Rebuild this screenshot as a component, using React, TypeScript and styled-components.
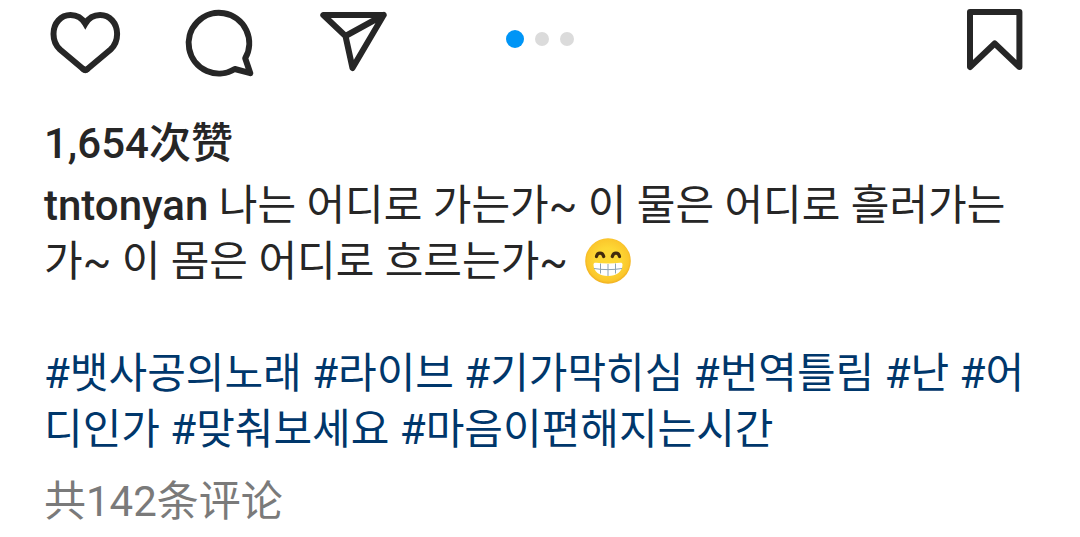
import React from "react";
import styled, { createGlobalStyle } from "styled-components";

const GlobalStyle = createGlobalStyle`
  body {
    margin: 0;
    background: #ffffff;
    color: #262626;
    font-family: Roboto, "Noto Sans CJK KR", sans-serif;
    font-size: 42px;
    line-height: 56px;
  }
`;

const Post = styled.article`
  padding-top: 6px;
`;

const Toolbar = styled.div`
  display: grid;
  grid-template-columns: 1fr auto 1fr;
  align-items: start;
  padding: 0 49px;
`;

const Actions = styled.div<{ $end?: boolean }>`
  display: flex;
  gap: 63px;
  justify-content: ${(p) => (p.$end ? "flex-end" : "flex-start")};
`;

const IconButton = styled.button`
  display: block;
  padding: 0;
  border: 0;
  background: none;
  color: inherit;
  cursor: pointer;
`;

const Glyph = styled.svg`
  display: block;
  width: 72px;
  height: 72px;
  fill: none;
  stroke: currentColor;
  stroke-width: 6;
  stroke-linejoin: round;
  stroke-linecap: round;
`;

const Dots = styled.div`
  display: flex;
  align-items: center;
  gap: 11px;
  height: 66px;
`;

const Dot = styled.span<{ $active?: boolean }>`
  width: ${(p) => (p.$active ? 18 : 14)}px;
  height: ${(p) => (p.$active ? 18 : 14)}px;
  border-radius: 50%;
  background: ${(p) => (p.$active ? "#0095f6" : "#dbdbdb")};
`;

const Details = styled.div`
  padding: 38px 40px 0 44px;
`;

const Likes = styled.p`
  margin: 0 0 6px;
  font-family: Roboto, "Noto Sans CJK SC", sans-serif;
  font-weight: 500;
`;

const Caption = styled.p`
  margin: 0 0 56px;
`;

const Tags = styled.p`
  margin: 0 0 16px;
`;

const UserLink = styled.a`
  color: inherit;
  font-weight: 500;
  text-decoration: none;
`;

const TagLink = styled.a`
  color: #00376b;
  text-decoration: none;
`;

const CommentsLink = styled.a`
  display: block;
  color: #7a7a7a;
  font-family: Roboto, "Noto Sans CJK SC", sans-serif;
  text-decoration: none;
`;

const Emoji = styled.svg`
  width: 48px;
  height: 48px;
  margin-left: 6px;
  vertical-align: -9px;
`;

const tags = [
  "뱃사공의노래",
  "라이브",
  "기가막히심",
  "번역틀림",
  "난",
  "어디인가",
  "맞춰보세요",
  "마음이편해지는시간",
];

const GrinEmoji = () => (
  <Emoji viewBox="0 0 48 48" role="img" aria-label="😁">
    <defs>
      <radialGradient id="face" cx="50%" cy="48%" r="52%">
        <stop offset="50%" stopColor="#fdd835" />
        <stop offset="88%" stopColor="#fbc72c" />
        <stop offset="100%" stopColor="#f0ae1e" />
      </radialGradient>
    </defs>
    <circle cx="24" cy="24" r="22.8" fill="url(#face)" />
    <path
      d="M12.500 19.500c1-4.500 6-4.500 7.200 0M28.300 19.500c1.200-4.500 6.200-4.500 7.200 0"
      fill="none"
      stroke="#422b0d"
      strokeWidth="3.2"
      strokeLinecap="round"
    />
    <path
      d="M9.500 27.500c0-1.500 1-2 2.500-1.800 8 1 16 1 24 0 1.500-.2 2.500.3 2.500 1.800 0 7-6 11.500-14.500 11.500S9.500 34.500 9.500 27.500z"
      fill="#ffffff"
    />
    <path
      d="M10 31.500c9 1.500 19 1.500 28 0M16.500 26.500v10M24 27v12M31.500 26.500v10"
      fill="none"
      stroke="#8ba3b3"
      strokeWidth="1"
    />
  </Emoji>
);

export default function App() {
  return (
    <>
      <GlobalStyle />
      <Post>
        <Toolbar>
          <Actions>
            <IconButton type="button" aria-label="赞">
              <Glyph viewBox="49 6 72 72">
                <path
                  strokeLinejoin="miter"
                  d="M83.500 69.300 60 49.500C55.500 45.300 53.500 40 53.500 34 53.500 23 61 15 70.500 15c6.500 0 11.500 3 14.800 8.700C88.600 18 93.600 15 100.100 15c9.500 0 17 8 17 19 0 6-2 11.300-6.500 15.500L87.100 69.300"
                />
                <path d="M83.500 69.300q1.800 1.500 3.600 0" />
              </Glyph>
            </IconButton>
            <IconButton type="button" aria-label="评论">
              <Glyph viewBox="184 6 72 72">
                <path d="M245.200 58.300A30.300 30.300 0 1 0 234.800 69L250.300 73.200z" />
              </Glyph>
            </IconButton>
            <IconButton type="button" aria-label="分享">
              <Glyph viewBox="319 6 72 72">
                <path d="M323.300 15h60.400L352.500 68l-7-32zM345.500 36l38.200-21" />
              </Glyph>
            </IconButton>
          </Actions>
          <Dots>
            <Dot $active />
            <Dot />
            <Dot />
          </Dots>
          <Actions $end>
            <IconButton type="button" aria-label="收藏">
              <Glyph viewBox="959 6 72 72">
                <path d="M970 12h49.400v55l-24.700-23.500L970 67z" />
              </Glyph>
            </IconButton>
          </Actions>
        </Toolbar>
        <Details>
          <Likes lang="zh-CN">1,654次赞</Likes>
          <Caption lang="ko">
            <UserLink href="#tntonyan">tntonyan</UserLink> 나는 어디로 가는가~ 이
            물은 어디로 흘러가는가~ 이 몸은 어디로 흐르는가~ <GrinEmoji />
          </Caption>
          <Tags lang="ko">
            {tags.map((tag) => (
              <React.Fragment key={tag}>
                <TagLink href={`#${tag}`}>{`#${tag}`}</TagLink>{" "}
              </React.Fragment>
            ))}
          </Tags>
          <CommentsLink href="#comments" lang="zh-CN">
            共142条评论
          </CommentsLink>
        </Details>
      </Post>
    </>
  );
}
